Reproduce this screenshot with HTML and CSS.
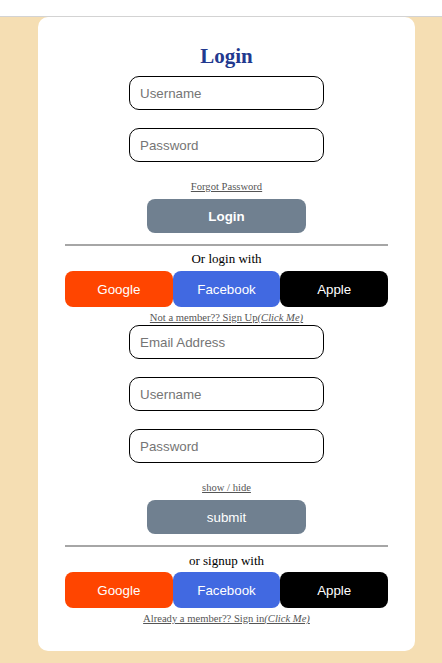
FILE: index.html
```html
<!DOCTYPE html>
<html>
<head>
<meta charset="utf-8">
<title>Login</title>
<link rel="stylesheet" href="styles.css">
</head>
<body>
<div class="topbar"></div>
<div class="card">
  <h2 class="title">Login</h2>
  <input class="field f-first" type="text" placeholder="Username">
  <input class="field f-next" type="password" placeholder="Password">
  <a class="link link-after-field" href="#">Forgot Password</a>
  <button class="main-btn main-login">Login</button>
  <div class="rule"></div>
  <div class="with">Or login with</div>
  <div class="socials">
    <button class="soc google">Google</button>
    <button class="soc facebook">Facebook</button>
    <button class="soc apple">Apple</button>
  </div>
  <a class="link link-after-soc" href="#">Not a member?? Sign Up<i>(Click Me)</i></a>
  <input class="field f-email" type="email" placeholder="Email Address">
  <input class="field f-next" type="text" placeholder="Username">
  <input class="field f-next" type="password" placeholder="Password">
  <a class="link link-after-field" href="#">show / hide</a>
  <button class="main-btn main-submit">submit</button>
  <div class="rule rule-2"></div>
  <div class="with with-2">or signup with</div>
  <div class="socials socials-2">
    <button class="soc google">Google</button>
    <button class="soc facebook">Facebook</button>
    <button class="soc apple">Apple</button>
  </div>
  <a class="link link-last" href="#">Already a member?? Sign in<i>(Click Me)</i></a>
</div>
</body>
</html>
```
FILE: styles.css
```css
html, body {
  margin: 0;
  padding: 0;
}
body {
  background: #f5deb3;
  font-family: "Liberation Serif", "Times New Roman", serif;
  height: 663px;
  overflow: hidden;
}
.topbar {
  height: 16px;
  background: #ffffff;
  border-bottom: 1px solid #d3d3d3;
}
.card {
  margin-left: 38px;
  width: 377px;
  box-sizing: border-box;
  background: #ffffff;
  border-radius: 10px;
  padding: 27px 27px 26px;
  display: flex;
  flex-direction: column;
  align-items: center;
}
.title {
  margin: 0;
  height: 24px;
  line-height: 24px;
  font-size: 21px;
  font-weight: bold;
  color: #22398f;
}
.field {
  box-sizing: border-box;
  width: 195px;
  height: 34px;
  border: 1px solid #000;
  border-radius: 10px;
  padding: 0 10px;
  font-family: "Liberation Sans", Arial, sans-serif;
  font-size: 13.33px;
  outline: none;
  background: #fff;
}
.field::placeholder {
  color: #757575;
}
.f-first { margin-top: 8px; }
.f-next { margin-top: 18px; }
.f-email { margin-top: 1px; }
.link {
  display: block;
  height: 12px;
  line-height: 12px;
  font-size: 10.6px;
  color: #555555;
  text-decoration: underline;
}
.link-after-field { margin-top: 19px; }
.link-after-soc { margin-top: 5px; }
.link-last { margin-top: 5px; }
.main-btn {
  width: 159px;
  height: 34px;
  margin-top: 6px;
  border: none;
  border-radius: 8px;
  background: #708090;
  color: #ffffff;
  font-family: "Liberation Sans", Arial, sans-serif;
  font-size: 13.33px;
  padding: 0;
}
.main-login { font-weight: bold; }
.rule {
  align-self: stretch;
  height: 0;
  border-top: 2px solid #a6a6a6;
  margin-top: 11px;
}
.rule-2 { margin-top: 11px; }
.with {
  height: 16px;
  line-height: 16px;
  font-size: 13px;
  color: #000;
  margin-top: 5px;
}
.with-2 { margin-top: 6px; }
.socials {
  align-self: stretch;
  display: flex;
  margin-top: 4px;
}
.socials-2 { margin-top: 3px; }
.soc {
  flex: 1;
  height: 36px;
  border: none;
  border-radius: 8px;
  color: #ffffff;
  font-family: "Liberation Sans", Arial, sans-serif;
  font-size: 13.33px;
  font-weight: normal;
  padding: 0;
}
.google { background: #ff4500; }
.facebook { background: #4169e1; }
.apple { background: #000000; }
```
